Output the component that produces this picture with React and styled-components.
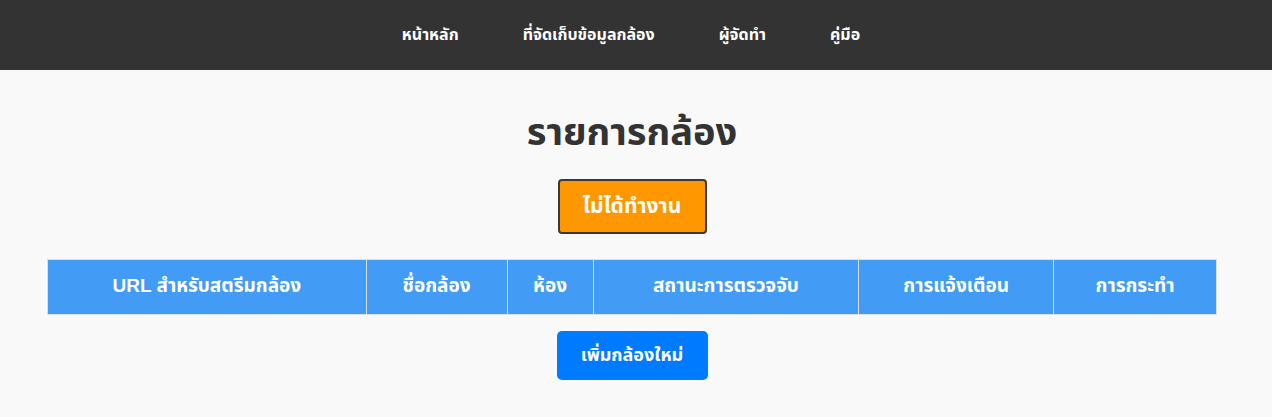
import React from "react";
import styled, { createGlobalStyle } from "styled-components";

const Global = createGlobalStyle`
  html, body { margin: 0; padding: 0; }
  body {
    background: #f9f9f9;
    font-family: "Liberation Sans", Arial, "Noto Sans Thai", "Noto Sans", sans-serif;
    color: #333;
  }
`;

const NavBar = styled.nav`
  background: #333333;
  height: 70px;
  display: flex;
  align-items: center;
  justify-content: center;
  padding-right: 10px;
`;

const NavList = styled.ul`
  list-style: none;
  margin: 0;
  padding: 0;
  display: flex;
  gap: 64px;
`;

const NavLink = styled.a`
  color: #ffffff;
  text-decoration: none;
  font-size: 16px;
  font-weight: bold;
`;

const Main = styled.main`
  display: flex;
  flex-direction: column;
  align-items: center;
  padding: 0 8px 0 0;
`;

const Title = styled.h1`
  margin: 40px 0 0;
  font-size: 38px;
  font-weight: bold;
  color: #333;
  line-height: 1.2;
`;

const StatusButton = styled.button`
  margin-top: 23px;
  width: 149px;
  height: 55px;
  background: #ff9800;
  color: #fff;
  border: 2px solid #3a3a3a;
  border-radius: 4px;
  font-family: inherit;
  font-size: 21px;
  font-weight: bold;
`;

const Table = styled.table`
  margin-top: 25px;
  width: 1170px;
  border-collapse: collapse;
`;

const Th = styled.th`
  background: #429bf5;
  color: #fff;
  font-size: 19px;
  font-weight: bold;
  height: 55px;
  padding: 0 10px;
  border: 1px solid #dddddd;
  box-sizing: border-box;
`;

const AddButton = styled.button`
  margin-top: 16px;
  width: 151px;
  height: 49px;
  background: #007bff;
  color: #fff;
  border: none;
  border-radius: 5px;
  font-family: inherit;
  font-size: 18px;
  font-weight: bold;
`;

const navItems = ["หน้าหลัก", "ที่จัดเก็บข้อมูลกล้อง", "ผู้จัดทำ", "คู่มือ"];
const columns = [
  { label: "URL สำหรับสตรีมกล้อง", w: 319 },
  { label: "ชื่อกล้อง", w: 141 },
  { label: "ห้อง", w: 86 },
  { label: "สถานะการตรวจจับ", w: 266 },
  { label: "การแจ้งเตือน", w: 195 },
  { label: "การกระทำ", w: 163 },
];

export default function App() {
  return (
    <>
      <Global />
      <NavBar>
        <NavList>
          {navItems.map((n) => (
            <li key={n}>
              <NavLink href="#">{n}</NavLink>
            </li>
          ))}
        </NavList>
      </NavBar>
      <Main>
        <Title>รายการกล้อง</Title>
        <StatusButton>ไม่ได้ทำงาน</StatusButton>
        <Table>
          <thead>
            <tr>
              {columns.map((c) => (
                <Th key={c.label} style={{ width: c.w }}>
                  {c.label}
                </Th>
              ))}
            </tr>
          </thead>
        </Table>
        <AddButton>เพิ่มกล้องใหม่</AddButton>
      </Main>
    </>
  );
}
